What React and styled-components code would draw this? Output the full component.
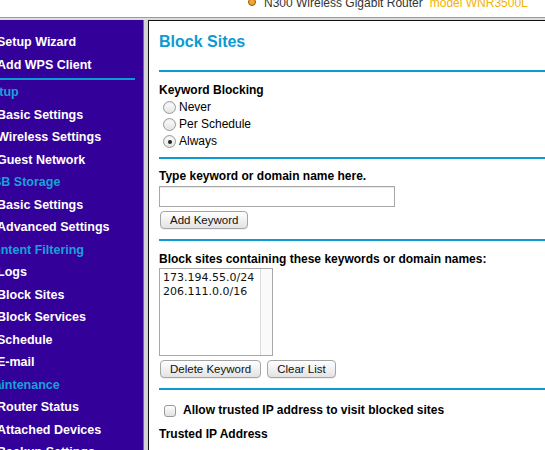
import React from "react";
import styled, { createGlobalStyle } from "styled-components";

const GlobalStyle = createGlobalStyle`
  html, body {
    margin: 0;
    padding: 0;
    background: #fff;
    overflow: hidden;
  }
  body {
    font-family: "Liberation Sans", Arial, Helvetica, sans-serif;
    color: #000;
  }
`;

const CYAN = "#0c9ad2";

const menu = [
  { label: "Setup Wizard" },
  { label: "Add WPS Client" },
  { rule: true },
  { label: "Setup", head: true },
  { label: "Basic Settings" },
  { label: "Wireless Settings" },
  { label: "Guest Network" },
  { label: "USB Storage", head: true },
  { label: "Basic Settings" },
  { label: "Advanced Settings" },
  { label: "Content Filtering", head: true },
  { label: "Logs" },
  { label: "Block Sites" },
  { label: "Block Services" },
  { label: "Schedule" },
  { label: "E-mail" },
  { label: "Maintenance", head: true },
  { label: "Router Status" },
  { label: "Attached Devices" },
  { label: "Backup Settings" },
];

const Page = styled.div`
  width: 545px;
  height: 450px;
  overflow: hidden;
  display: flex;
  flex-direction: column;
`;

const TopBar = styled.header`
  height: 17px;
  flex: none;
  display: flex;
  align-items: flex-start;
  padding-left: 248px;
  background: #fff;
  border-bottom: 1px solid #9c9c9c;
  overflow: hidden;
`;

const Dot = styled.span`
  width: 6px;
  height: 6px;
  margin-top: -2px;
  border-radius: 50%;
  background: #f2a533;
  border: 1px solid #8a5a10;
  flex: none;
`;

const Product = styled.span`
  margin: -3px 0 0 8px;
  font-size: 12px;
  line-height: 12px;
  color: #333;
  white-space: nowrap;
`;

const Model = styled.span`
  margin-left: 7px;
  color: #f2b300;
`;

const Frame = styled.div`
  flex: 1;
  display: flex;
  background: #d3d3d3;
  border-top: 2px solid #dcdcdc;
  min-height: 0;
`;

const Sidebar = styled.nav`
  width: 143px;
  flex: none;
  background: #330099;
  border-right: 1px solid #6f6f6f;
  padding-top: 11px;
  overflow: hidden;
`;

const MenuItem = styled.div`
  margin-left: ${({ $head }) => ($head ? "-16px" : "-3px")};
  font-size: 12.5px;
  font-weight: bold;
  line-height: 22.5px;
  color: ${({ $head }) => ($head ? "#16a2d9" : "#fff")};
  white-space: nowrap;
`;

const MenuRule = styled.div`
  width: 135px;
  height: 2px;
  margin: 2px 0 1px;
  background: ${CYAN};
`;

const Content = styled.main`
  flex: 1;
  margin-left: 4px;
  background: #fff;
  border-left: 1px solid #111;
  border-top: 1px solid #111;
  padding-left: 10px;
  overflow: hidden;
`;

const Title = styled.h1`
  margin: 11px 0 19px;
  font-size: 16px;
  line-height: 19px;
  font-weight: bold;
  color: ${CYAN};
`;

const Section = styled.section`
  border-top: 2px solid ${CYAN};
  padding: ${({ $top = 9 }) => $top}px 0 ${({ $bottom = 8 }) => $bottom}px;
  display: flex;
  flex-direction: column;
  align-items: flex-start;
`;

const Label = styled.div`
  margin-top: ${({ $gap = 0 }) => $gap}px;
  font-size: 12px;
  font-weight: bold;
  line-height: 17px;
  white-space: nowrap;
`;

const Choice = styled.label`
  display: flex;
  align-items: center;
  gap: 3px;
  padding-left: 4px;
  font-size: 12px;
  line-height: 17px;
  font-weight: ${({ $bold }) => ($bold ? "bold" : "normal")};
  white-space: nowrap;
`;

const Radio = styled.input.attrs({ type: "radio" })`
  appearance: none;
  margin: 0;
  width: 13px;
  height: 13px;
  border-radius: 50%;
  border: 1px solid #9a9a9a;
  background: linear-gradient(#fdfdfd, #e4e4e4);
  box-shadow: inset 0 1px 1px rgba(0, 0, 0, 0.08);
  display: grid;
  place-items: center;
  box-sizing: border-box;

  &:checked::after {
    content: "";
    width: 4px;
    height: 4px;
    border-radius: 50%;
    background: #222;
  }
`;

const Checkbox = styled.input.attrs({ type: "checkbox" })`
  appearance: none;
  margin: 0 4px 0 1px;
  width: 12px;
  height: 12px;
  border-radius: 3px;
  border: 1px solid #9a9a9a;
  background: linear-gradient(#fdfdfd, #e2e2e2);
  box-sizing: border-box;
`;

const TextBox = styled.input`
  margin-top: 1px;
  width: 236px;
  height: 21px;
  box-sizing: border-box;
  border: 1px solid #a8a8a8;
  box-shadow: inset 0 1px 1px rgba(0, 0, 0, 0.1);
  padding: 0 3px;
  font-size: 12px;
`;

const ButtonRow = styled.div`
  display: flex;
  gap: 5px;
  margin-top: 4px;
`;

const Button = styled.button`
  height: 18px;
  padding: 0 9px;
  margin: 0 0 0 1px;
  border: 1px solid #a4a4a4;
  border-radius: 4px;
  background: linear-gradient(#ffffff, #f1f1f1 50%, #e3e3e3);
  box-shadow: 0 1px 0 rgba(0, 0, 0, 0.06);
  font-family: "Liberation Sans", Arial, sans-serif;
  font-size: 11.5px;
  line-height: 16px;
  color: #111;
  white-space: nowrap;
`;

const ListBox = styled.div`
  width: 114px;
  height: 88px;
  box-sizing: border-box;
  border: 1px solid #a8a8a8;
  display: flex;
`;

const Options = styled.div`
  flex: 1;
  padding: 2px 0 0 3px;
  font-family: "DejaVu Sans", Verdana, sans-serif;
  font-size: 11px;
  line-height: 13.5px;
  color: #111;
`;

const Track = styled.div`
  width: 11px;
  border-left: 1px solid #dcdcdc;
  background: #fafafa;
`;

export default function App() {
  return (
    <>
      <GlobalStyle />
      <Page>
        <TopBar>
          <Dot />
          <Product>
            N300 Wireless Gigabit Router<Model>model WNR3500L</Model>
          </Product>
        </TopBar>
        <Frame>
          <Sidebar>
            {menu.map((item, i) =>
              item.rule ? (
                <MenuRule key={i} />
              ) : (
                <MenuItem key={i} $head={item.head}>
                  {item.label}
                </MenuItem>
              )
            )}
          </Sidebar>
          <Content>
            <Title>Block Sites</Title>

            <Section $top={10} $bottom={7}>
              <Label>Keyword Blocking</Label>
              <Choice>
                <Radio name="kw" />
                Never
              </Choice>
              <Choice>
                <Radio name="kw" />
                Per Schedule
              </Choice>
              <Choice>
                <Radio name="kw" defaultChecked />
                Always
              </Choice>
            </Section>

            <Section $bottom={10}>
              <Label>Type keyword or domain name here.</Label>
              <TextBox />
              <ButtonRow>
                <Button>Add Keyword</Button>
              </ButtonRow>
            </Section>

            <Section $top={10} $bottom={10}>
              <Label>Block sites containing these keywords or domain names:</Label>
              <ListBox>
                <Options>
                  <div>173.194.55.0/24</div>
                  <div>206.111.0.0/16</div>
                </Options>
                <Track />
              </ListBox>
              <ButtonRow>
                <Button>Delete Keyword</Button>
                <Button>Clear List</Button>
              </ButtonRow>
            </Section>

            <Section $top={12}>
              <Choice $bold>
                <Checkbox />
                Allow trusted IP address to visit blocked sites
              </Choice>
              <Label $gap={7}>Trusted IP Address</Label>
            </Section>
          </Content>
        </Frame>
      </Page>
    </>
  );
}
